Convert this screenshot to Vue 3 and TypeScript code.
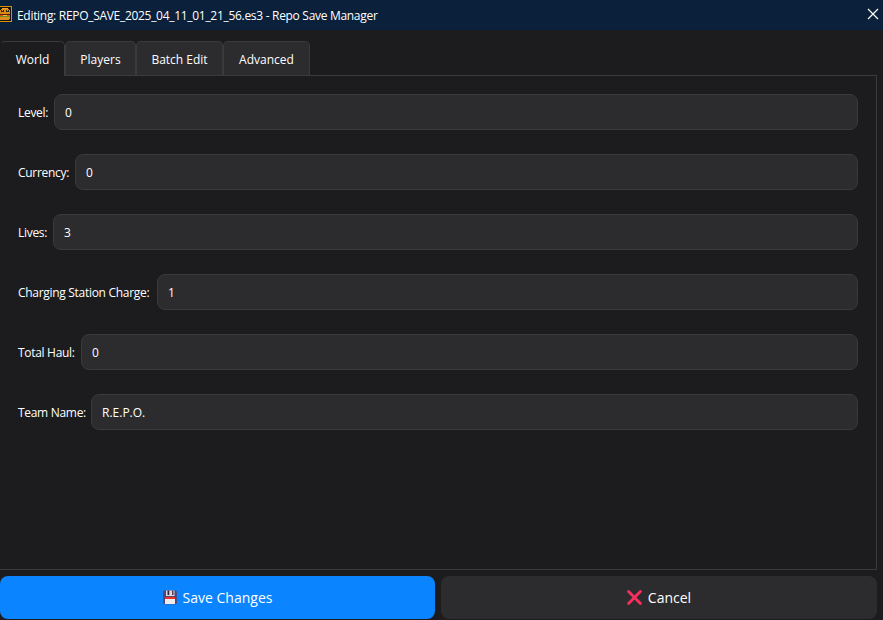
<script setup lang="ts">
import { ref } from 'vue'

interface Field {
  id: string
  label: string
  value: string
}

const tabs: string[] = ['World', 'Players', 'Batch Edit', 'Advanced']
const active = ref('World')
const fields = ref<Field[]>([
  { id: 'level', label: 'Level:', value: '0' },
  { id: 'currency', label: 'Currency:', value: '0' },
  { id: 'lives', label: 'Lives:', value: '3' },
  { id: 'charge', label: 'Charging Station Charge:', value: '1' },
  { id: 'haul', label: 'Total Haul:', value: '0' },
  { id: 'team', label: 'Team Name:', value: 'R.E.P.O.' },
])
</script>

<template>
  <div class="window">
    <header class="titlebar">
      <svg class="app-icon" width="12" height="16" viewBox="0 0 12 16" shape-rendering="crispEdges">
        <rect width="12" height="16" fill="#d99000" />
        <rect width="11" height="14" y="1" fill="#17120b" />
        <path d="M1 3h8v1h1v4H0V4h1z" fill="#d98b16" />
        <path d="M2 2h6v1H2z" fill="#efa52a" />
        <path d="M1 4h3v2H1zM6 4h3v2H6z" fill="#3a210c" />
        <path d="M2 4h1v1H2zM7 4h1v1H7z" fill="#d9a34b" />
        <path d="M0 8h10v1H0z" fill="#57220f" />
        <path d="M0 9h10v1H0z" fill="#e24a1c" />
        <path d="M0 10h10v1H0z" fill="#6f8f22" />
        <path d="M3 9h4v1H3z" fill="#f3bd32" />
        <path d="M0 11h10v2H9v1H0z" fill="#dc8d20" />
      </svg>
      <span class="title">Editing: REPO_SAVE_2025_04_11_01_21_56.es3 - Repo Save Manager</span>
      <svg class="close" width="12" height="12" viewBox="0 0 12 12">
        <path d="M1 1L11 11M11 1L1 11" fill="none" stroke="#fff" stroke-width="1.2" />
      </svg>
    </header>

    <nav class="tabs">
      <button
        v-for="(tab, i) in tabs"
        :key="tab"
        :class="['tab', `tab-${i}`, { active: active === tab }]"
        @click="active = tab"
      ><span>{{ tab }}</span></button>
    </nav>

    <main class="panel">
      <div v-for="field in fields" :key="field.id" class="row">
        <label :for="field.id" :class="['label', field.id]">{{ field.label }}</label>
        <input :id="field.id" v-model="field.value" :class="['input', `input-${field.id}`]" type="text" />
      </div>
    </main>

    <footer class="actions">
      <button class="action save">
        <svg width="14" height="15" viewBox="0 0 14 15">
          <path d="M1 .5h12l.8.8v12l-.8.9H1.600L.2 12.900V1.300z" fill="#58436a" />
          <rect x="3" y=".5" width="8.500" height="5.500" fill="#d9dce2" />
          <rect x="4.500" y=".5" width="1.800" height="4.500" fill="#33263f" />
          <rect x="9" y=".5" width="1.500" height="4.500" fill="#4a3b55" />
          <rect x="2" y="7" width="10" height="7" fill="#ececef" />
          <rect x="2" y="7" width="10" height="2" fill="#f0302f" />
        </svg>
        <span>Save Changes</span>
      </button>
      <button class="action cancel">
        <svg width="15" height="15" viewBox="0 0 15 15">
          <path d="M1.600 1.600L13.400 13.400M13.400 1.600L1.600 13.400" fill="none" stroke="#f92f60" stroke-width="2.800" stroke-linecap="round" />
        </svg>
        <span>Cancel</span>
      </button>
    </footer>
  </div>
</template>

<style>
body {
  margin: 0;
  background: #1c1c1e;
}
</style>

<style scoped>
.window {
  display: flex;
  flex-direction: column;
  box-sizing: border-box;
  width: 883px;
  height: 620px;
  overflow: hidden;
  background: #1c1c1e;
  color: #fff;
  font-family: "Open Sans", "Noto Sans", sans-serif;
  font-size: 12px;
}
button, input {
  font: inherit;
  color: inherit;
  margin: 0;
}
.titlebar {
  display: flex;
  align-items: center;
  height: 30px;
  flex: none;
  background: #0b203a;
}
.app-icon {
  margin-top: -2px;
}
.title {
  margin-left: 5px;
  white-space: nowrap;
  letter-spacing: -0.300px;
}
.close {
  margin: -2px 4px 0 auto;
}
.tabs {
  display: flex;
  height: 34px;
  flex: none;
  margin-top: 11px;
}
.tab {
  box-sizing: border-box;
  padding: 2px 0 0;
  border: 1px solid #3a3a3c;
  border-bottom: 0;
  border-left-width: 1px;
  border-radius: 5px 5px 0 0;
  background: #2c2c2e;
}
.tab.active {
  position: relative;
  height: 35px;
  padding: 0;
  border-left-color: #1c1c1e;
  background: #1c1c1e;
}
.tab-0 { width: 65px; }
.tab-1 { width: 71px; }
.tab-2 { width: 87px; }
.tab-3 { width: 87px; }
.panel {
  display: flex;
  flex-direction: column;
  gap: 24px;
  box-sizing: border-box;
  width: 877px;
  height: 495px;
  flex: none;
  padding: 18px 18px 0;
  border: 1px solid #3a3a3c;
  border-left: 0;
}
.row {
  display: flex;
  align-items: center;
  gap: 6px;
  height: 36px;
}
.label {
  flex: none;
  white-space: nowrap;
}
.level { width: 30px; letter-spacing: -0.300px; }
.currency { width: 51px; letter-spacing: -0.300px; }
.lives { width: 29px; letter-spacing: -0.300px; }
.charge { width: 133px; letter-spacing: -0.300px; }
.haul { width: 57px; letter-spacing: -0.300px; }
.team { width: 67px; letter-spacing: -0.300px; }
.input {
  box-sizing: border-box;
  flex: 1;
  min-width: 0;
  height: 36px;
  padding: 0 10px;
  border: 1px solid #3a3a3c;
  border-radius: 8px;
  outline: none;
  background: #2c2c2e;
}
.actions {
  display: flex;
  gap: 6px;
  width: 877px;
  height: 43px;
  margin-top: 6px;
}
.action {
  display: flex;
  align-items: center;
  justify-content: center;
  gap: 6px;
  height: 43px;
  padding: 0;
  border: 0;
  border-radius: 8px;
  font-size: 14px;
}
.save {
  width: 435px;
  background: #0a84ff;
}
.cancel {
  width: 436px;
  background: #2c2c2e;
}
</style>
